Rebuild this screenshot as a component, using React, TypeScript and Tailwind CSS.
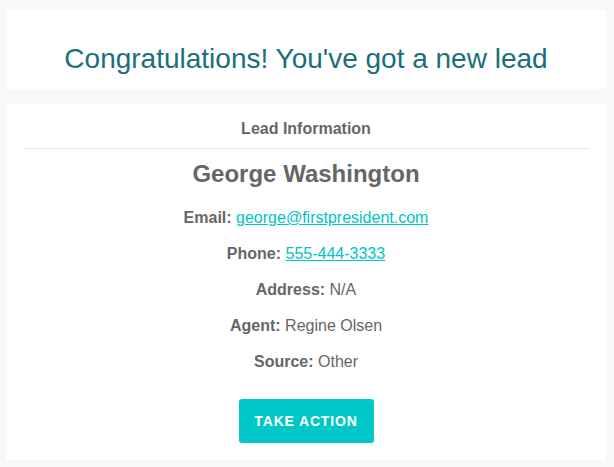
const fields = [
  { label: "Email:", value: "george@firstpresident.com", link: "mailto:george@firstpresident.com" },
  { label: "Phone:", value: "555-444-3333", link: "tel:5554443333" },
  { label: "Address:", value: "N/A" },
  { label: "Agent:", value: "Regine Olsen" },
  { label: "Source:", value: "Other" },
];

export default function App() {
  return (
    <div className="min-h-[467px] bg-[#f8f8f8] pt-[10px] font-['Liberation_Sans',Arial,sans-serif] text-[#666666]">
      <div className="ml-[6px] w-[600px]">
        <div className="flex h-[79px] items-end justify-center bg-white pb-[16px]">
          <h1 className="text-[28px] leading-none text-[#1a6f7b]">
            Congratulations! You've got a new lead
          </h1>
        </div>

        <div className="mt-[15px] h-[356px] bg-white px-[18px] pt-[15px]">
          <div className="border-b border-[#e3e3e3] pb-[10px] text-center text-[16px] font-bold leading-[19px]">
            Lead Information
          </div>
          <h2 className="mt-[11px] text-center text-[24px] font-bold leading-[28px]">George Washington</h2>

          <div className="mt-[12px] flex flex-col items-center">
            {fields.map((f) => (
              <p key={f.label} className="h-[36px] text-[16px] leading-[36px]">
                <span className="font-bold">{f.label}</span>{" "}
                {f.link ? (
                  <a href={f.link} className="text-[#00c4c4] underline">
                    {f.value}
                  </a>
                ) : (
                  f.value
                )}
              </p>
            ))}
          </div>

          <div className="mt-[19px] flex justify-center">
            <a
              href="#"
              className="flex h-[44px] w-[135px] items-center justify-center rounded-[3px] bg-[#00c8c8] text-[14px] font-bold uppercase tracking-[0.06em] text-white"
            >
              Take Action
            </a>
          </div>
        </div>
      </div>
    </div>
  );
}
